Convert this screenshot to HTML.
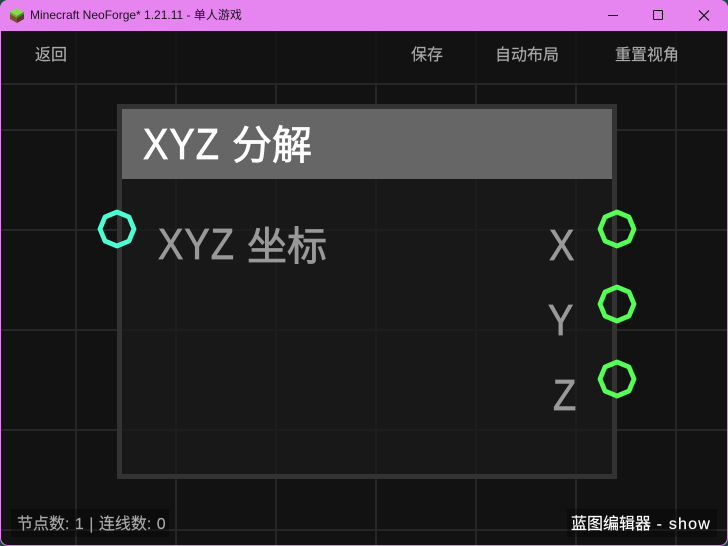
<!DOCTYPE html>
<html><head><meta charset="utf-8"><style>
html,body{margin:0;padding:0;background:#1a4a40}
#w{position:relative;width:728px;height:546px;overflow:hidden;background:#121212;font-family:"Liberation Sans","Noto Sans CJK SC",sans-serif}
.a{position:absolute;white-space:nowrap}
.v{position:absolute;top:84px;bottom:0;width:2px;background:#262626}
.h{position:absolute;left:0;right:0;height:2px;background:#262626}
.vf{position:absolute;top:31px;height:52px;width:2px;background:#161616}
.lat{font-size:38px;line-height:50px;letter-spacing:1px;-webkit-text-stroke:.7px currentColor;transform:scaleY(1.15);transform-origin:0 38.2px}
.cjk{font-family:"Noto Sans CJK SC",sans-serif;font-size:40px;line-height:50px;letter-spacing:0;-webkit-text-stroke:.8px currentColor}
.sm{font-size:16px;line-height:20px;-webkit-text-stroke:.15px currentColor}
.n{position:absolute;background:#1d1d1d}
</style></head><body><div id="w">
<div class="h" style="top:83px"></div>
<div class="h" style="top:129px"></div><div class="h" style="top:229px"></div><div class="h" style="top:329px"></div><div class="h" style="top:429px"></div><div class="h" style="top:529px"></div>
<div class="v" style="left:75px"></div><div class="v" style="left:175px"></div><div class="v" style="left:275px"></div><div class="v" style="left:375px"></div><div class="v" style="left:475px"></div><div class="v" style="left:575px"></div><div class="v" style="left:675px"></div>
<div class="vf" style="left:75px"></div><div class="vf" style="left:175px"></div><div class="vf" style="left:275px"></div><div class="vf" style="left:375px"></div><div class="vf" style="left:475px"></div><div class="vf" style="left:575px"></div><div class="vf" style="left:675px"></div>
<div class="a" style="left:0;top:0;width:728px;height:31px;background:#e685ef"></div>
<svg class="a" style="left:9px;top:7px" width="16" height="17" viewBox="0 0 16 17"><path d="M8 1L15 5L8 9L1 5Z" fill="#8cd84f"/><path d="M1 5L8 9V16L1 12Z" fill="#7d5030"/><path d="M15 5L8 9V16L15 12Z" fill="#5a3a24"/><path d="M1 5L8 9V11L1 7Z" fill="#5fae3a"/><path d="M15 5L8 9V11L15 7Z" fill="#4a8f30"/></svg>
<div class="a" style="left:30px;top:8px;font-size:12px;line-height:15px;color:#1c1020">Minecraft NeoForge* 1.21.11 - 单人游戏</div>
<svg class="a" style="left:600px;top:0" width="128" height="31"><path d="M8 15.5H18" stroke="#000" fill="none"/><rect x="53.5" y="10.5" width="9" height="9" rx="1" stroke="#000" fill="none"/><path d="M99 10.5L109 20.5M109 10.5L99 20.5" stroke="#000" fill="none"/></svg>
<div class="a sm" style="left:35px;top:46px;color:#aaa">返回</div>
<div class="a sm" style="left:411px;top:46px;color:#aaa">保存</div>
<div class="a sm" style="left:495px;top:46px;color:#aaa">自动布局</div>
<div class="a sm" style="left:615px;top:46px;color:#aaa">重置视角</div>
<div class="a" style="left:117px;top:104px;width:490px;height:365px;border:5px solid #333;background:#181818"></div>
<div class="n" style="left:175px;top:179px;width:2px;height:295px"></div><div class="n" style="left:275px;top:179px;width:2px;height:295px"></div><div class="n" style="left:375px;top:179px;width:2px;height:295px"></div><div class="n" style="left:475px;top:179px;width:2px;height:295px"></div><div class="n" style="left:575px;top:179px;width:2px;height:295px"></div>
<div class="n" style="left:122px;top:229px;width:490px;height:2px"></div><div class="n" style="left:122px;top:329px;width:490px;height:2px"></div><div class="n" style="left:122px;top:429px;width:490px;height:2px"></div>
<div class="a" style="left:122px;top:109px;width:490px;height:70px;background:#666"></div>
<div class="a lat" style="left:143px;top:122px;color:#fff">XYZ</div>
<div class="a cjk" style="left:232px;top:117px;color:#fff">分解</div>
<div class="a lat" style="left:158px;top:222px;color:#999">XYZ</div>
<div class="a cjk" style="left:247px;top:218px;color:#999">坐标</div>
<div class="a lat" style="left:549px;top:223px;color:#999">X</div>
<div class="a lat" style="left:548px;top:298px;color:#999">Y</div>
<div class="a lat" style="left:553px;top:373px;color:#999">Z</div>
<svg class="a" style="left:90px;top:200px" width="560" height="200" fill="none" stroke-width="4.8" stroke-linejoin="round">
<polygon stroke="#4dffd2" points="27,12 39,17 44,29 39,41 27,46 15,41 10,29 15,17"/>
<polygon stroke="#55ff55" points="527,12 539,17 544,29 539,41 527,46 515,41 510,29 515,17"/>
<polygon stroke="#55ff55" points="527,87 539,92 544,104 539,116 527,121 515,116 510,104 515,92"/>
<polygon stroke="#55ff55" points="527,162 539,167 544,179 539,191 527,196 515,191 510,179 515,167"/>
</svg>
<div class="a" style="left:11px;top:509px;width:158px;height:28px;background:rgba(0,0,0,.3)"></div>
<div class="a sm" style="left:17px;top:515px;color:#aaa">节点数<span style="letter-spacing:.5px">: 1 | </span>连线数<span style="letter-spacing:.5px">: 0</span></div>
<div class="a" style="left:567px;top:509px;width:150px;height:28px;background:rgba(0,0,0,.3)"></div>
<div class="a sm" style="left:571px;top:515px;color:#fff">蓝图编辑器<span style="letter-spacing:1.2px"> - show</span></div>
<div class="a" style="left:0;top:0;width:726px;height:544px;border:1px solid #e685ef;border-radius:8px;box-shadow:0 0 0 12px #1a4a40"></div>
</div></body></html>
